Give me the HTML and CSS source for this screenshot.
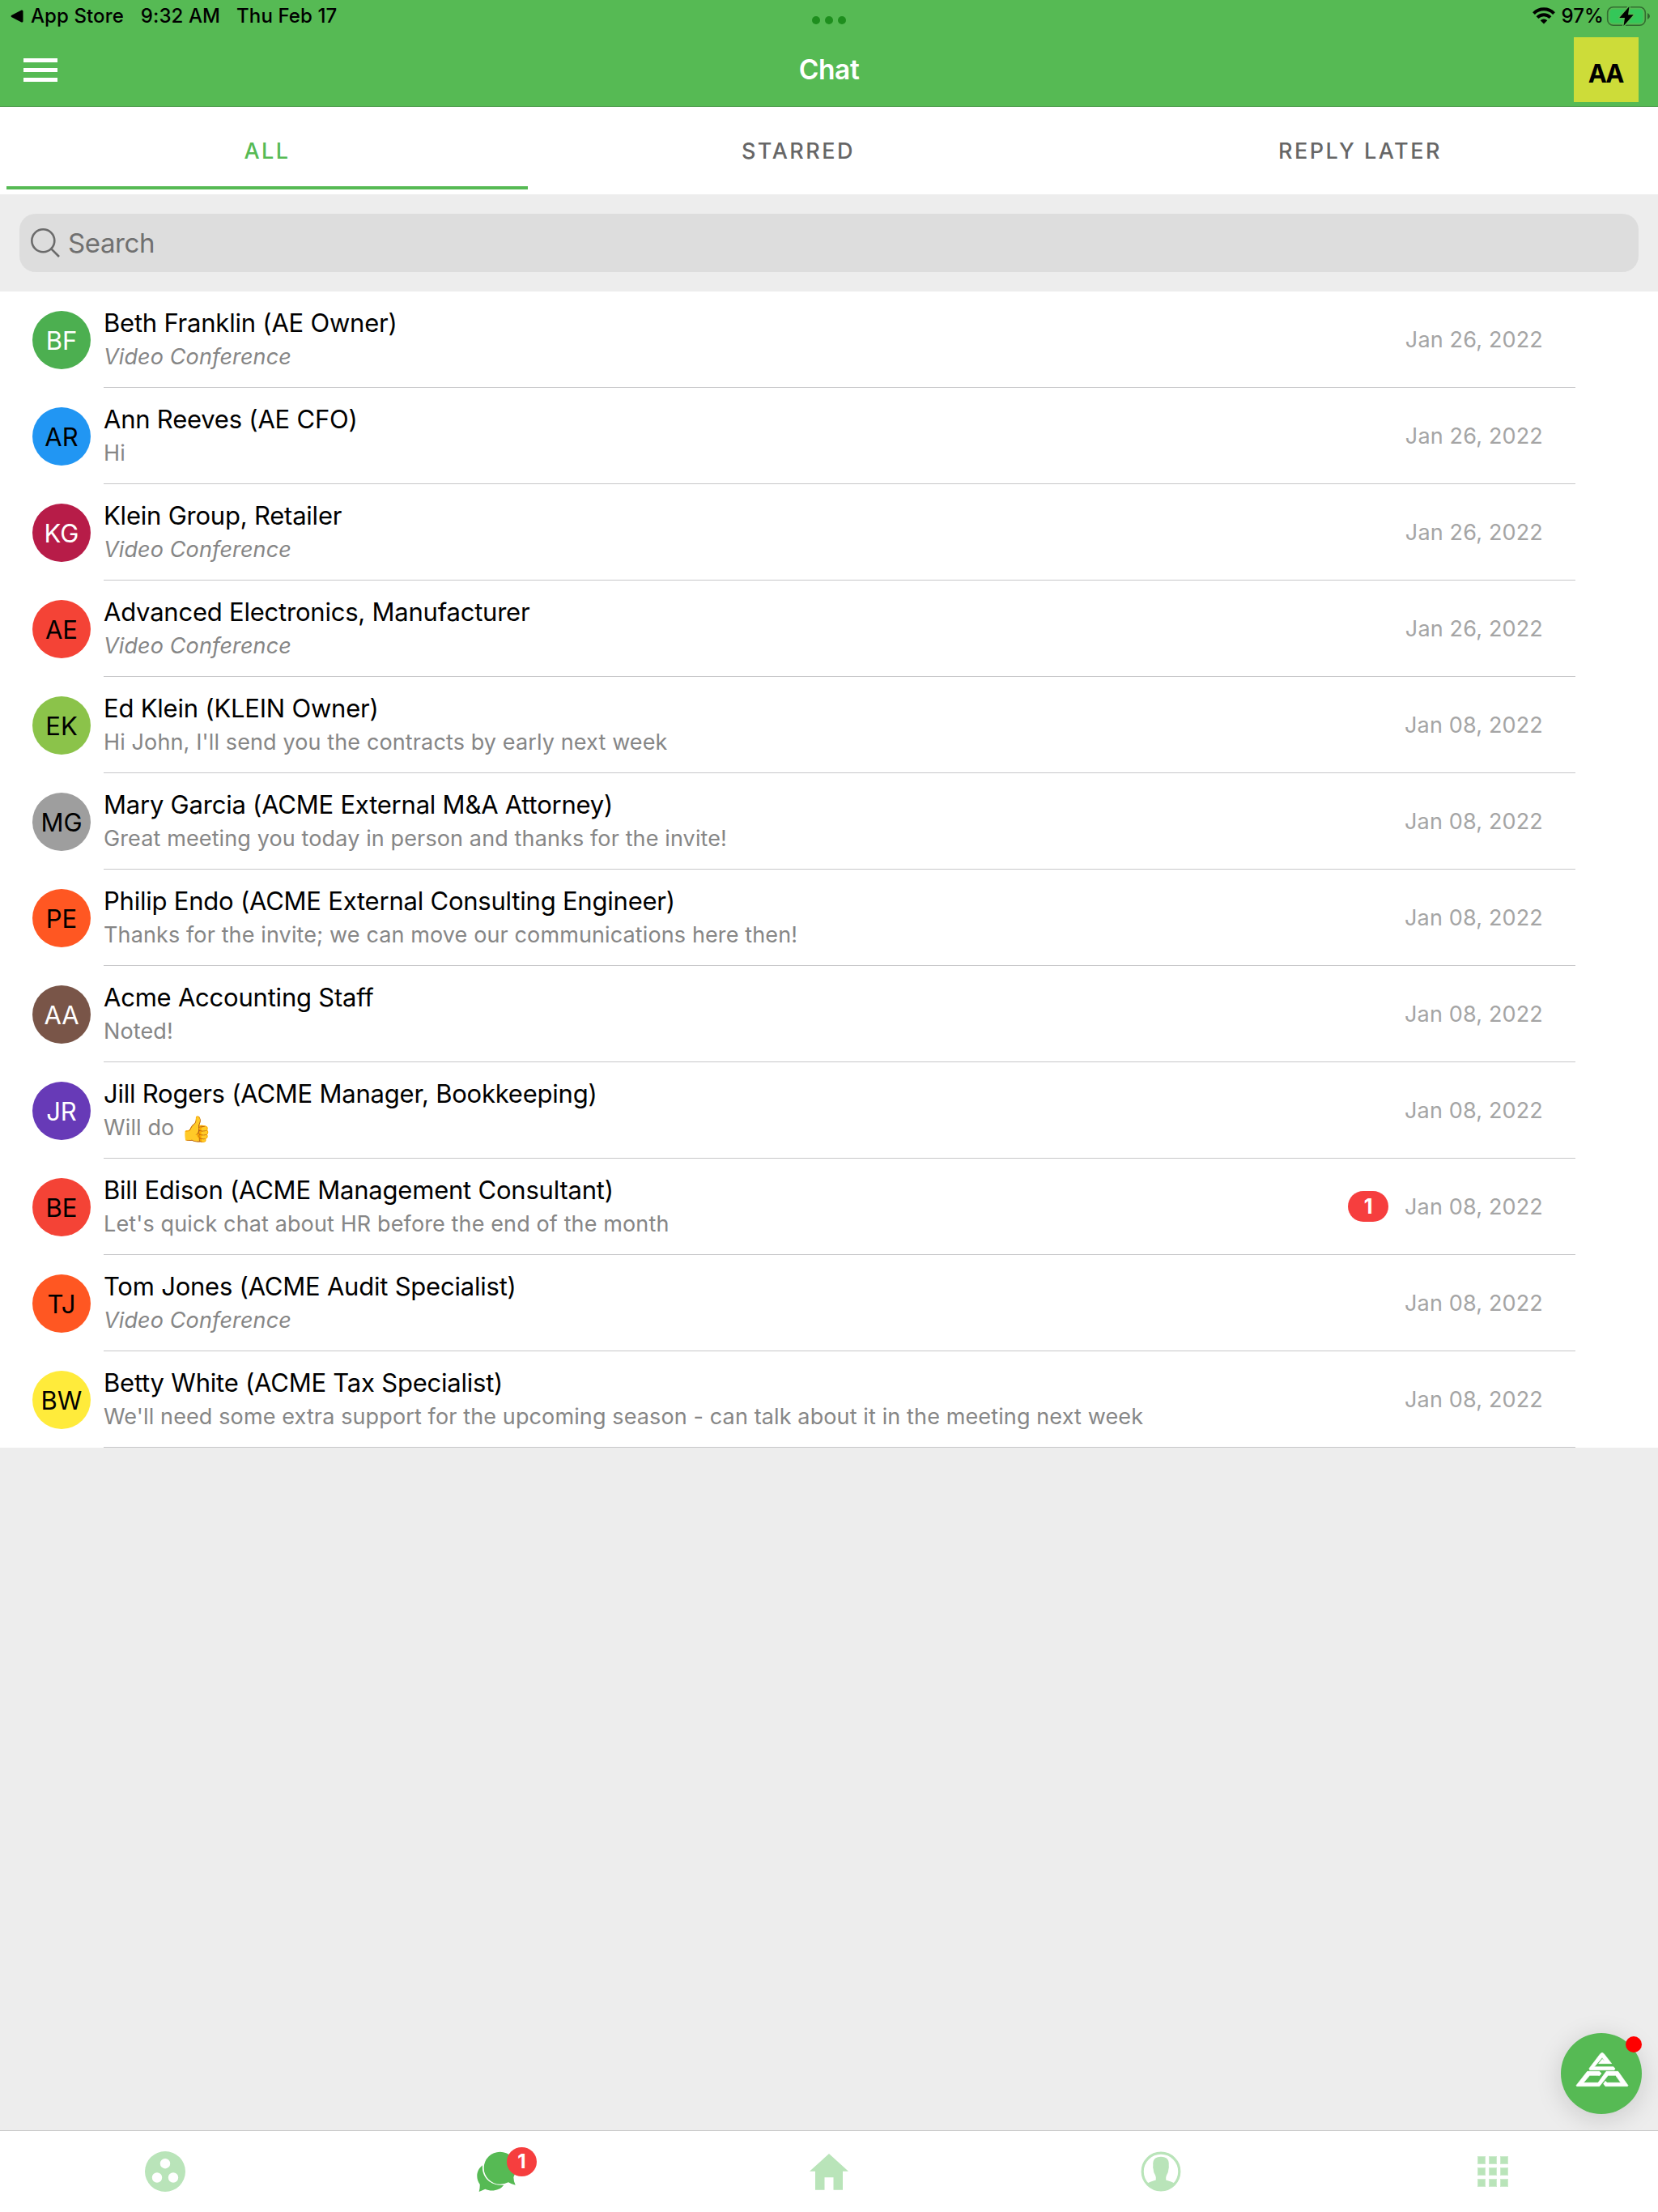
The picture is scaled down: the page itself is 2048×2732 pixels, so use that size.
FILE: index.html
```
<!DOCTYPE html>
<html lang="en">
<head>
  <meta charset="utf-8">
  <title>Chat</title>
  <link rel="stylesheet" href="styles.css">
</head>
<body>
  <header class="header">
    <div class="status-bar">
      <div class="status-left">
        <svg class="back-arrow" viewBox="0 0 16 16"><path d="M1 7 13.5.6Q15.5 0 15.5 2V14Q15.5 16 13.5 15.4L1 9Q0 8 1 7Z"/></svg>
        <span class="status-app">App Store</span>
        <span class="status-time">9:32 AM</span>
        <span class="status-date">Thu Feb 17</span>
      </div>
      <div class="dots"><i></i><i></i><i></i></div>
      <div class="status-right">
        <svg class="wifi" viewBox="0 0 28 21">
          <path d="M1.5 7.6A17.5 17.5 0 0 1 26.5 7.6" fill="none" stroke="#000" stroke-width="4"/>
          <path d="M6 12.6A11.3 11.3 0 0 1 22 12.6" fill="none" stroke="#000" stroke-width="4"/>
          <path d="M14 20.5 9.7 16.3A6.2 6.2 0 0 1 18.3 16.3Z"/>
        </svg>
        <span class="status-percent">97%</span>
        <svg class="battery" viewBox="0 0 56 28">
          <rect x="1.7" y="2.7" width="46.6" height="22.6" rx="7" fill="none" stroke="#000" stroke-opacity=".42" stroke-width="1.6"/>
          <rect x="4.5" y="5.5" width="41" height="17" rx="4" fill="#34c759"/>
          <path d="M51 10Q54 11.5 54 14T51 18Z" fill-opacity=".45"/>
          <path d="M28.5 2 16.3 16H23L21.5 26 33.7 12.3H27Z" stroke="#56ba54" stroke-width="3" paint-order="stroke" stroke-linejoin="round"/>
        </svg>
      </div>
    </div>
    <div class="navbar">
      <div class="menu"><i></i><i></i><i></i></div>
      <h1>Chat</h1>
      <div class="profile">AA</div>
    </div>
  </header>

  <div class="tabs">
    <div class="tab active">ALL</div>
    <div class="tab">STARRED</div>
    <div class="tab">REPLY LATER</div>
  </div>

  <div class="search-area">
    <div class="search">
      <svg class="search-icon" viewBox="0 0 36 36" fill="none" stroke="#6b6b6b" stroke-width="2.6"><circle cx="15.3" cy="15.3" r="14"/><path d="M25.3 25.3 35 35"/></svg>
      <span>Search</span>
    </div>
  </div>

  <div class="list">
    <div class="row">
      <div class="avatar green">BF</div>
      <div class="row-body">
        <div class="text"><div class="name">Beth Franklin (AE Owner)</div><div class="message italic">Video Conference</div></div>
        <div class="date">Jan 26, 2022</div>
      </div>
    </div>
    <div class="row">
      <div class="avatar blue">AR</div>
      <div class="row-body">
        <div class="text"><div class="name">Ann Reeves (AE CFO)</div><div class="message">Hi</div></div>
        <div class="date">Jan 26, 2022</div>
      </div>
    </div>
    <div class="row">
      <div class="avatar crimson">KG</div>
      <div class="row-body">
        <div class="text"><div class="name">Klein Group, Retailer</div><div class="message italic">Video Conference</div></div>
        <div class="date">Jan 26, 2022</div>
      </div>
    </div>
    <div class="row">
      <div class="avatar red">AE</div>
      <div class="row-body">
        <div class="text"><div class="name">Advanced Electronics, Manufacturer</div><div class="message italic">Video Conference</div></div>
        <div class="date">Jan 26, 2022</div>
      </div>
    </div>
    <div class="row">
      <div class="avatar lime">EK</div>
      <div class="row-body">
        <div class="text"><div class="name">Ed Klein (KLEIN Owner)</div><div class="message">Hi John, I'll send you the contracts by early next week</div></div>
        <div class="date">Jan 08, 2022</div>
      </div>
    </div>
    <div class="row">
      <div class="avatar gray">MG</div>
      <div class="row-body">
        <div class="text"><div class="name">Mary Garcia (ACME External M&amp;A Attorney)</div><div class="message">Great meeting you today in person and thanks for the invite!</div></div>
        <div class="date">Jan 08, 2022</div>
      </div>
    </div>
    <div class="row">
      <div class="avatar orange">PE</div>
      <div class="row-body">
        <div class="text"><div class="name">Philip Endo (ACME External Consulting Engineer)</div><div class="message">Thanks for the invite; we can move our communications here then!</div></div>
        <div class="date">Jan 08, 2022</div>
      </div>
    </div>
    <div class="row">
      <div class="avatar brown">AA</div>
      <div class="row-body">
        <div class="text"><div class="name">Acme Accounting Staff</div><div class="message">Noted!</div></div>
        <div class="date">Jan 08, 2022</div>
      </div>
    </div>
    <div class="row">
      <div class="avatar purple">JR</div>
      <div class="row-body">
        <div class="text"><div class="name">Jill Rogers (ACME Manager, Bookkeeping)</div><div class="message">Will do <span class="emoji">👍</span></div></div>
        <div class="date">Jan 08, 2022</div>
      </div>
    </div>
    <div class="row">
      <div class="avatar red">BE</div>
      <div class="row-body">
        <div class="text"><div class="name">Bill Edison (ACME Management Consultant)</div><div class="message">Let's quick chat about HR before the end of the month</div></div>
        <div class="badge">1</div>
        <div class="date">Jan 08, 2022</div>
      </div>
    </div>
    <div class="row">
      <div class="avatar orange">TJ</div>
      <div class="row-body">
        <div class="text"><div class="name">Tom Jones (ACME Audit Specialist)</div><div class="message italic">Video Conference</div></div>
        <div class="date">Jan 08, 2022</div>
      </div>
    </div>
    <div class="row">
      <div class="avatar yellow">BW</div>
      <div class="row-body">
        <div class="text"><div class="name">Betty White (ACME Tax Specialist)</div><div class="message">We'll need some extra support for the upcoming season - can talk about it in the meeting next week</div></div>
        <div class="date">Jan 08, 2022</div>
      </div>
    </div>
  </div>

  <!-- floating button -->
  <div class="fab">
    <svg viewBox="0 0 300 300" fill="#fff" stroke="#fff" stroke-width="2" stroke-linejoin="round">
      <path d="M105 131 146 77Q153 68 160 77L188 113H140L153 97 163 104 153 91 124 125H195L201 132 198 137H107Z"/>
      <path d="M57 194 98 142H143L150 150 143 158 138 157H107L84 184H138L168 142H212L249 194 247 197H165L158 188 165 178 171 184H222L203 157H175L143 197H59Z"/>
    </svg>
    <span class="fab-dot"></span>
  </div>

  <nav class="bottom-nav">
    <div class="nav-item">
      <svg viewBox="0 0 50 50"><path fill-rule="evenodd" d="M25 0a25 25 0 1 1 0 50a25 25 0 1 1 0-50ZM25 9a6.2 6.2 0 1 0 0 12.4a6.2 6.2 0 1 0 0-12.4ZM15 26.3a6.2 6.2 0 1 0 0 12.4a6.2 6.2 0 1 0 0-12.4ZM35 26.3a6.2 6.2 0 1 0 0 12.4a6.2 6.2 0 1 0 0-12.4Z"/></svg>
    </div>
    <div class="nav-item active">
      <div class="nav-icon">
        <svg viewBox="87 110 150 150">
          <path d="M108 162C82 182 84 214 98 232Q99 246 95 260L118 250C140 260 172 256 187 235C140 239 104 208 108 162Z"/>
          <path d="M173 112a60 60 0 0 1 60 60Q233 189 223 206Q223 220 230 235Q216 233 204 225Q190 232 173 232a60 60 0 1 1 0-120Z"/>
        </svg>
        <span class="nav-badge">1</span>
      </div>
    </div>
    <div class="nav-item">
      <svg viewBox="0 0 50 50"><path d="M25 3 49 24.7H42V47.7H30.5V32.3H19.5V47.7H8V24.7H1Z"/></svg>
    </div>
    <div class="nav-item">
      <svg viewBox="0 0 50 50">
        <circle cx="25" cy="25" r="22.8" fill="none" stroke="#b9e4b9" stroke-width="3.2"/>
        <path d="M8 39.5Q12 37.3 18.8 35.5Q19.3 32 18 29.5Q15.7 26 15.6 22Q14.9 20 15.3 17Q14.5 6.7 25 6.7T34.7 17Q35.1 20 34.4 22Q34.3 26 32 29.5Q30.7 32 31.2 35.5Q38 37.3 42 39.5Q35 48.6 25 48.6T8 39.5Z"/>
      </svg>
    </div>
    <div class="nav-item">
      <div class="grid-icon"><i></i><i></i><i></i><i></i><i></i><i></i><i></i><i></i><i></i></div>
    </div>
  </nav>
</body>
</html>
```
FILE: styles.css
```
* {
  box-sizing: border-box;
}

body {
  margin: 0;
  height: 2732px;
  display: flex;
  flex-direction: column;
  position: relative;
  overflow: hidden;
  background-color: #ededed;
  font-family: Inter, "Liberation Sans", sans-serif;
  color: #000;
}

svg {
  display: block;
}

/* Header */
.header {
  height: 132px;
  background-color: #56ba54;
  border-bottom: 1px solid #4b9a4a;
}

.status-bar {
  display: grid;
  grid-template-columns: 1fr auto 1fr;
  align-items: center;
  height: 39px;
  padding: 0 8px 0 13px;
  font-size: 24px;
  font-weight: 500;
  letter-spacing: 0.1px;
}

.status-left,
.status-right {
  display: flex;
  align-items: center;
}

.status-right {
  justify-content: flex-end;
}

.back-arrow {
  width: 16px;
  height: 16px;
  margin-right: 9px;
}

.status-app {
  margin-right: 21px;
}

.status-time {
  margin-right: 20px;
}

.dots {
  display: flex;
  gap: 6px;
  padding: 11px 5px 0 0;
}

.dots i {
  width: 10px;
  height: 10px;
  border-radius: 50%;
  background-color: #1e8e1e;
}

.wifi {
  width: 28px;
  height: 21px;
}

.status-percent {
  margin: 0 3px 0 8px;
}

.battery {
  width: 56px;
  height: 28px;
}

.navbar {
  display: grid;
  grid-template-columns: 80px 1fr 80px;
  align-items: center;
  height: 92px;
  padding: 2px 24px 0;
}

.menu {
  display: flex;
  flex-direction: column;
  gap: 7px;
  padding-left: 5px;
}

.menu i {
  width: 42px;
  height: 5px;
  background-color: #fff;
}

.navbar h1 {
  margin: 0;
  text-align: center;
  font-size: 33.5px;
  font-weight: 600;
  letter-spacing: -0.4px;
  color: #fff;
}

.profile {
  height: 80px;
  padding: 10px 2px 0 0;
  background-color: #cddc39;
  font-size: 31px;
  font-weight: 700;
  letter-spacing: -2px;
  line-height: 70px;
  text-align: center;
}

/* Tabs */
.tabs {
  display: grid;
  grid-template-columns: 644px 652px 720px;
  gap: 8px;
  height: 108px;
  padding: 0 8px 6px;
  background-color: #fff;
}

.tab {
  padding-top: 7px;
  border-bottom: 4px solid transparent;
  line-height: 95px;
  height: 102px;
  text-align: center;
  font-size: 27px;
  font-weight: 500;
  letter-spacing: 2.5px;
  color: #666;
}

.tab.active {
  color: #56ba54;
  border-color: #56ba54;
}

/* Search */
.search-area {
  padding: 24px;
}

.search {
  display: flex;
  align-items: center;
  gap: 10px;
  height: 72px;
  padding-left: 14px;
  border-radius: 20px;
  background-color: #ddd;
  font-size: 33px;
  letter-spacing: -0.4px;
  color: #707070;
}

.search-icon {
  width: 36px;
  height: 36px;
}

/* Chat list */
.list {
  background-color: #fff;
}

.row {
  display: flex;
  height: 119px;
  padding: 0 102px 0 40px;
}

.avatar {
  width: 72px;
  height: 72px;
  margin: 24px 16px 0 0;
  border-radius: 50%;
  font-size: 31px;
  line-height: 73px;
  text-align: center;
}

.green { background-color: #4caf50; color: #fff; }
.blue { background-color: #2196f3; }
.crimson { background-color: #b71c48; color: #fff; }
.red { background-color: #f44336; }
.lime { background-color: #8bc34a; }
.gray { background-color: #9e9e9e; }
.orange { background-color: #ff5722; }
.brown { background-color: #795548; color: #fff; }
.purple { background-color: #673ab7; color: #fff; }
.yellow { background-color: #ffeb3b; }

.row-body {
  display: flex;
  align-items: center;
  flex: 1;
  padding-right: 40px;
  border-bottom: 1px solid #c7c7c9;
}

.text {
  flex: 1;
  white-space: nowrap;
}

.name {
  font-size: 31px;
  line-height: 42px;
  letter-spacing: -0.22px;
}

.message {
  font-size: 27px;
  line-height: 41px;
  letter-spacing: 0.12px;
  color: #868686;
}

.italic {
  font-style: italic;
}

.emoji {
  display: inline-block;
  height: 41px;
  vertical-align: top;
  font-size: 31px;
  line-height: 43px;
}

.badge {
  width: 50px;
  height: 38px;
  margin-right: 20px;
  border-radius: 19px;
  background-color: #f63e3e;
  color: #fff;
  font-size: 25px;
  font-weight: 700;
  line-height: 38px;
  text-align: center;
}

.date {
  font-size: 27px;
  letter-spacing: 0.16px;
  color: #a5a5a5;
}

/* Floating button */
.fab {
  position: absolute;
  right: 20px;
  bottom: 121px;
  width: 100px;
  height: 100px;
  border-radius: 50%;
  background-color: #56ba54;
  box-shadow: 0 6px 32px rgba(0, 0, 0, 0.15);
}

.fab-dot {
  position: absolute;
  top: 4px;
  right: 0;
  width: 20px;
  height: 20px;
  border-radius: 50%;
  background-color: #f00;
}

/* Bottom navigation */
.bottom-nav {
  position: relative;
  display: grid;
  grid-template-columns: 408px 412px 408px 412px 408px;
  align-items: center;
  height: 101px;
  margin-top: auto;
  border-top: 1px solid #c8c8c8;
  background-color: #fff;
}

.nav-item {
  display: flex;
  justify-content: center;
}

.nav-item svg {
  width: 50px;
  height: 50px;
  fill: #b9e4b9;
}

.nav-item.active svg {
  fill: #56ba54;
}

.nav-icon {
  position: relative;
}

.nav-badge {
  position: absolute;
  left: 37px;
  top: -5px;
  width: 37px;
  height: 36px;
  border-radius: 50%;
  background-color: #f63e3e;
  color: #fff;
  font-size: 24px;
  font-weight: 700;
  line-height: 36px;
  text-align: center;
}

.grid-icon {
  display: grid;
  grid-template-columns: repeat(3, 10px);
  gap: 4px;
}

.grid-icon i {
  height: 10px;
  background-color: #b9e4b9;
  border: 1px solid #cdebcd;
}
```
